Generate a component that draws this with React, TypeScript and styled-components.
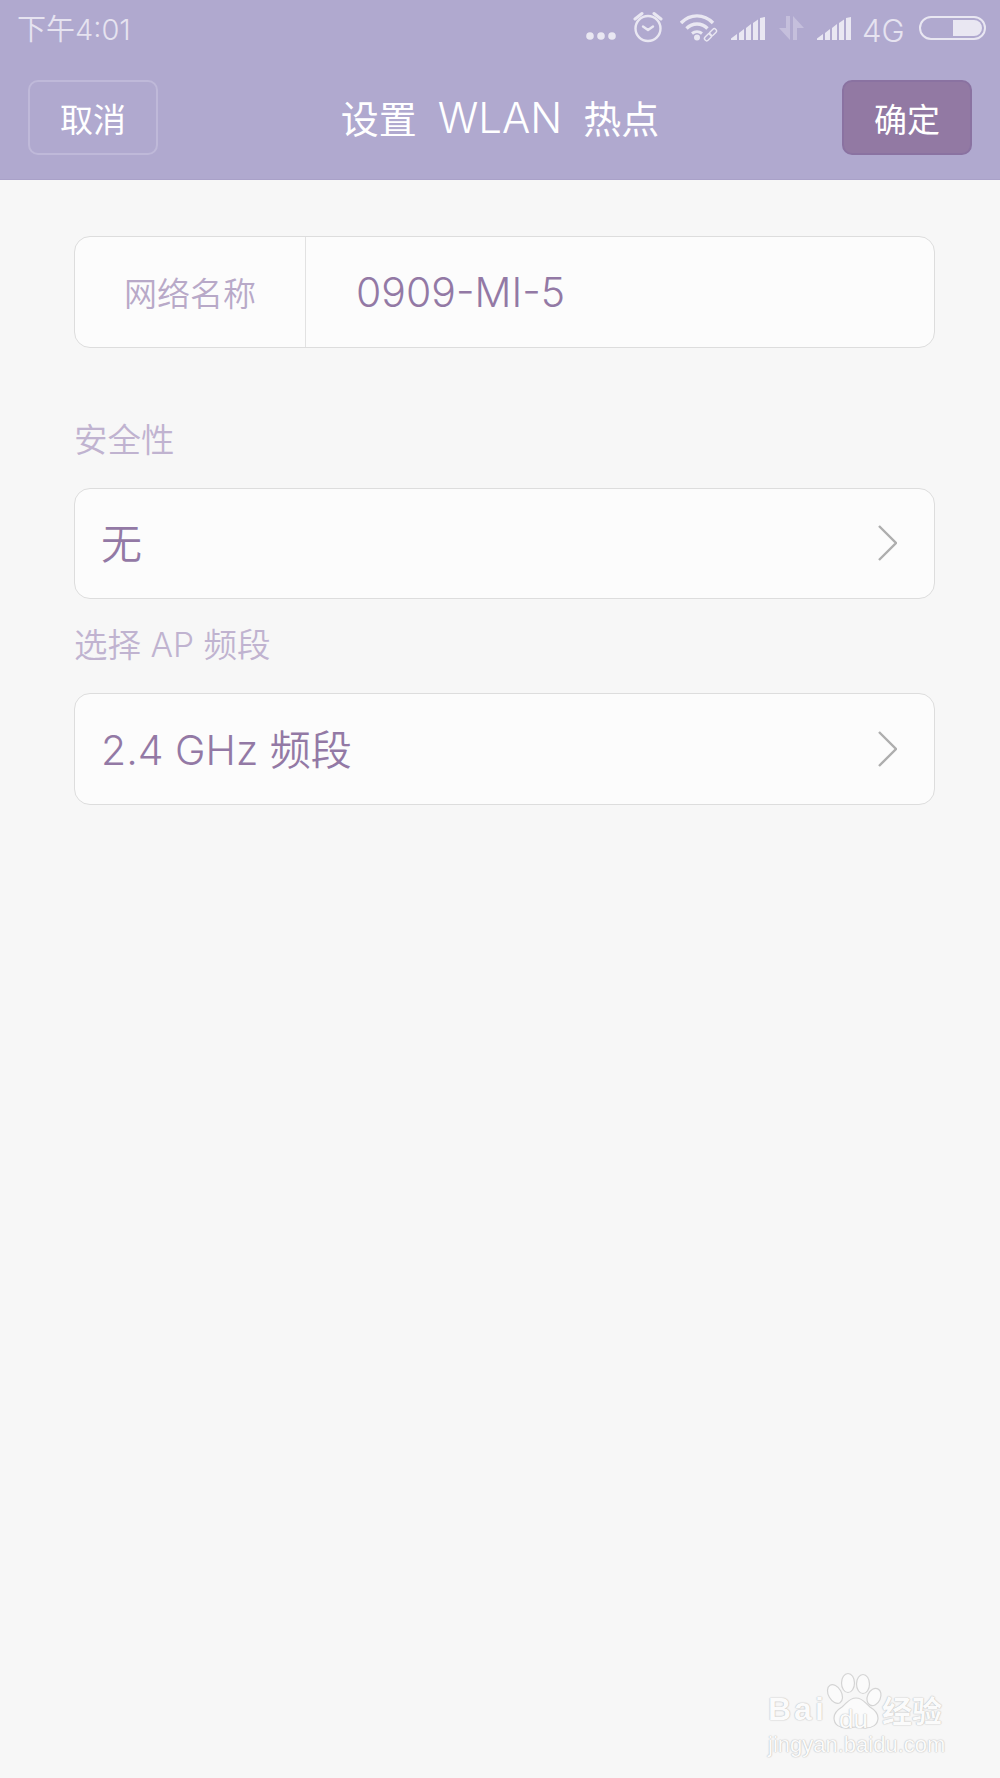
import React from "react";
import styled, { createGlobalStyle } from "styled-components";

const FONT = `Inter, "Noto Sans CJK SC", sans-serif`;

const Global = createGlobalStyle`
  html, body { margin: 0; padding: 0; background: #f7f7f7; }
  body { font-family: ${FONT}; }
`;

const Page = styled.div`
  position: relative;
  width: 1000px;
  height: 1778px;
  background: #f7f7f7;
  overflow: hidden;
`;

const Header = styled.header`
  background: #b0a9cf;
  height: 180px;
  box-sizing: border-box;
  border-bottom: 1px solid #a9a1c8;
`;

const StatusBar = styled.div`
  height: 60px;
  display: flex;
  align-items: center;
  justify-content: space-between;
  padding: 0 14px 0 17px;
`;

const Time = styled.span`
  font-size: 29px;
  font-weight: 350;
  color: #e6e3f0;
  line-height: 60px;
`;

const StatusIcons = styled.div`
  display: flex;
  align-items: center;
  height: 60px;
`;

const IconSvg = styled.svg<{ $left: number }>`
  display: block;
  height: 60px;
  margin-left: ${(p) => p.$left}px;
`;

const NetType = styled.span`
  margin-left: 10px;
  font-size: 31px;
  font-weight: 350;
  color: #e6e3f0;
  width: 42px;
`;

const NavBar = styled.nav`
  display: flex;
  align-items: center;
  justify-content: space-between;
  height: 75px;
  margin-top: 20px;
  padding: 0 28px;
`;

const NavButton = styled.div<{ $primary?: boolean }>`
  box-sizing: border-box;
  width: 130px;
  height: 75px;
  border-radius: 10px;
  display: flex;
  align-items: center;
  justify-content: center;
  font-size: 33px;
  font-weight: 400;
  color: #fff;
  background: ${(p) => (p.$primary ? "#9279a3" : "transparent")};
  border: 2px solid ${(p) => (p.$primary ? "#8a72a1" : "#bfb9d9")};
`;

const Title = styled.h1`
  margin: 0 0 3px;
  display: flex;
  align-items: baseline;
  gap: 21px;
  font-size: 38px;
  font-weight: 400;
  color: #fff;
  white-space: nowrap;
`;

const TitleLatin = styled.span`
  font-size: 42px;
  font-weight: 350;
`;

const Content = styled.main`
  display: flex;
  flex-direction: column;
  padding: 56px 65px 0 74px;
`;

const Card = styled.div`
  box-sizing: border-box;
  height: 111.5px;
  display: flex;
  align-items: center;
  background: #fcfcfc;
  border: 1.5px solid #dddddd;
  border-radius: 16px;
`;

const NameLabel = styled.div`
  box-sizing: border-box;
  width: 231px;
  height: 100%;
  flex: none;
  display: flex;
  align-items: center;
  justify-content: center;
  font-size: 33px;
  font-weight: 350;
  color: #b8a9c8;
  border-right: 1.5px solid #e2e2e2;
`;

const NameValue = styled.div`
  padding: 1px 0 0 50px;
  font-size: 41px;
  font-weight: 350;
  color: #9379a5;
`;

const SectionLabel = styled.div<{ $top: number }>`
  margin-top: ${(p) => p.$top}px;
  margin-bottom: 28px;
  height: 40px;
  line-height: 40px;
  font-size: 33.5px;
  font-weight: 350;
  color: #c0b3d0;
`;

const SelectRow = styled(Card)`
  justify-content: space-between;
  padding: 0 37px 0 26px;
`;

const SelectValue = styled.span`
  padding-bottom: 4px;
  font-size: 41px;
  font-weight: 350;
  color: #9379a5;
`;

const Watermark = styled.div`
  position: absolute;
  left: 766px;
  top: 1668px;
  width: 190px;
  height: 92px;
`;

const WmText = styled.span<{ $x: number; $y: number; $size: number; $weight?: number; $spacing?: number }>`
  position: absolute;
  left: ${(p) => p.$x}px;
  top: ${(p) => p.$y}px;
  font-family: "Liberation Sans", "Noto Sans CJK SC", sans-serif;
  font-size: ${(p) => p.$size}px;
  font-weight: ${(p) => p.$weight ?? 400};
  letter-spacing: ${(p) => p.$spacing ?? 0}px;
  line-height: 1;
  white-space: nowrap;
  color: #fbfbfb;
  text-shadow: 0 0 1.5px #b5b5b5, 0 0 1px #cfcfcf;
`;

const WmPaw = styled.svg`
  position: absolute;
  left: 0;
  top: 0;
`;

const c = "#e9e7f2";

const Dots = () => (
  <IconSvg $left={0} width={30} viewBox="0 0 30 60" fill={c}>
    <circle cx="4" cy="36" r="3.8" />
    <circle cx="15" cy="36" r="3.8" />
    <circle cx="26" cy="36" r="3.8" />
  </IconSvg>
);

const Alarm = () => (
  <IconSvg $left={17} width={30} viewBox="0 0 30 60" fill="none" stroke={c}>
    <circle cx="15" cy="28.5" r="12.5" strokeWidth="2.4" />
    <path d="M10 26.500l5 3.500 5-3.500" strokeWidth="2.4" strokeLinecap="round" strokeLinejoin="round" />
    <path d="M2 19l7-5.500M28 19l-7-5.500" strokeWidth="3" strokeLinecap="round" />
  </IconSvg>
);

const Wifi = () => (
  <IconSvg $left={17} width={38} viewBox="0 0 38 60" fill="none" stroke={c}>
    <path d="M1 23c9-9.500 23-9.500 32 0" strokeWidth="3.4" />
    <path d="M6.500 28.500c6-6 15-6 21 0" strokeWidth="3.4" />
    <path d="M12 33.500c3-2.500 7-2.500 10 0" strokeWidth="3" />
    <circle cx="17" cy="37.5" r="3" fill={c} stroke="none" />
    <rect x="24" y="35" width="8" height="4.5" rx="2.2" strokeWidth="1.4" transform="rotate(-45 28 37.250)" />
    <rect x="29" y="30" width="8" height="4.5" rx="2.2" strokeWidth="1.4" transform="rotate(-45 33 32.250)" />
  </IconSvg>
);

const Signal = ({ left }: { left: number }) => (
  <IconSvg $left={left} width={35} viewBox="0 0 35 60" fill={c}>
    <path d="M0 40v-1.500L6 34v6z" />
    <path d="M8 40v-7l5-4v11z" />
    <path d="M15 40V28l5-4v16z" />
    <path d="M22 40V23l5-3.500V40z" />
    <path d="M29 40V18l5-1v23z" />
  </IconSvg>
);

const Arrows = () => (
  <IconSvg $left={13} width={25} viewBox="0 0 25 60" fill="#c5bfdc">
    <path d="M11 16v24L0 28h7V16z" />
    <path d="M14 40V16l11 12h-7v12z" />
  </IconSvg>
);

const Battery = () => (
  <IconSvg $left={15} width={67} viewBox="0 0 67 60" fill="none">
    <rect x="1" y="17" width="65" height="22" rx="11" stroke={c} strokeWidth="2" />
    <path d="M34 20h21a8 8 0 0 1 0 16H34z" fill={c} />
  </IconSvg>
);

const Chevron = () => (
  <svg width="20" height="36" viewBox="0 0 20 36" fill="none">
    <path d="M2 1l17 17L2 35" stroke="#aeaeae" strokeWidth="2.4" />
  </svg>
);

const Paw = () => (
  <WmPaw width="190" height="92" viewBox="0 0 190 92" fill="#fbfbfb" stroke="#d4d4d4" strokeWidth="1.2">
    <ellipse cx="69" cy="26" rx="6.5" ry="10" transform="rotate(-30 69 26)" />
    <ellipse cx="82" cy="15" rx="6.5" ry="9.5" />
    <ellipse cx="97" cy="16" rx="6.5" ry="9.5" />
    <ellipse cx="108" cy="29" rx="6.5" ry="9" transform="rotate(25 108 29)" />
    <path d="M90 30c7 0 9 5 14 9 5 3 8 7 8 11 0 7-6 10-12 10-4 0-7-1-10-1s-6 1-10 1c-6 0-12-3-12-10 0-4 3-8 8-11 5-4 7-9 14-9z" />
  </WmPaw>
);

export default function App() {
  return (
    <Page>
      <Global />
      <Header>
        <StatusBar>
          <Time>下午4:01</Time>
          <StatusIcons>
            <Dots />
            <Alarm />
            <Wifi />
            <Signal left={13} />
            <Arrows />
            <Signal left={13} />
            <NetType>4G</NetType>
            <Battery />
          </StatusIcons>
        </StatusBar>
        <NavBar>
          <NavButton>取消</NavButton>
          <Title>
            <span>设置</span>
            <TitleLatin>WLAN</TitleLatin>
            <span>热点</span>
          </Title>
          <NavButton $primary>确定</NavButton>
        </NavBar>
      </Header>
      <Content>
        <Card>
          <NameLabel>网络名称</NameLabel>
          <NameValue>0909-MI-5</NameValue>
        </Card>
        <SectionLabel $top={72}>安全性</SectionLabel>
        <SelectRow>
          <SelectValue>无</SelectValue>
          <Chevron />
        </SelectRow>
        <SectionLabel $top={26}>选择 AP 频段</SectionLabel>
        <SelectRow>
          <SelectValue>2.4 GHz 频段</SelectValue>
          <Chevron />
        </SelectRow>
      </Content>
      <Watermark>
        <Paw />
        <WmText $x={2} $y={25} $size={32} $weight={700} $spacing={3}>Bai</WmText>
        <WmText $x={73} $y={38} $size={26}>du</WmText>
        <WmText $x={116} $y={29} $size={30} $weight={700}>经验</WmText>
        <WmText $x={2} $y={66} $size={22}>jingyan.baidu.com</WmText>
      </Watermark>
    </Page>
  );
}
